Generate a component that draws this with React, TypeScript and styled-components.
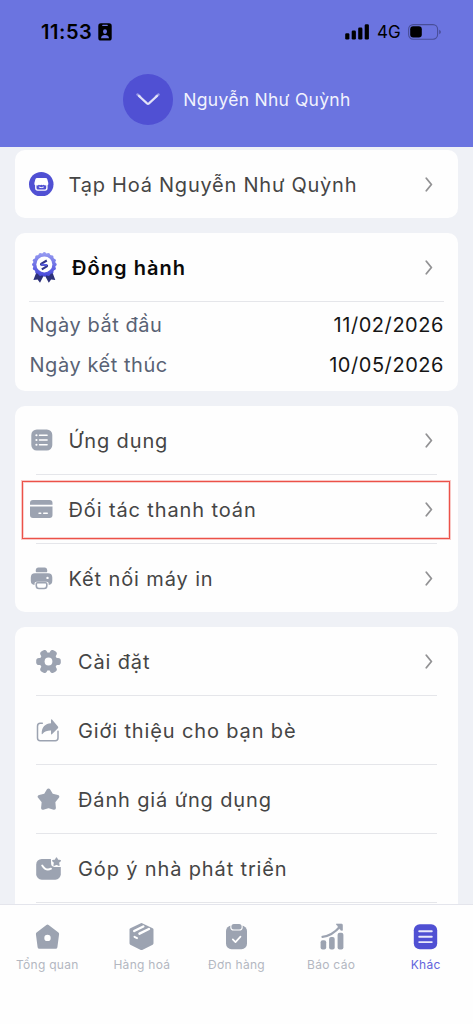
import React from "react";
import styled, { createGlobalStyle, css } from "styled-components";

const GRAY = "#9ca3b1";
const INDIGO = "#5050d3";

const GlobalStyle = createGlobalStyle`
  *, *::before, *::after { box-sizing: border-box; }
  body {
    margin: 0;
    background: #eff1f6;
    font-family: Inter, "Noto Sans", sans-serif;
    color: #454545;
  }
  svg { display: block; flex: none; }
`;

const Screen = styled.div`
  display: flex;
  flex-direction: column;
  height: 1024px;
  overflow: hidden;
  background: #eff1f6;
`;

const Header = styled.header`
  flex: none;
  height: 147px;
  background: #6b74e0;
`;

const StatusBar = styled.div`
  display: flex;
  align-items: center;
  justify-content: space-between;
  height: 63px;
  padding: 0 32px 0 41px;
  color: #000;
`;

const StatusGroup = styled.div<{ $gap: number }>`
  display: flex;
  align-items: center;
  gap: ${(p) => p.$gap}px;
`;

const Clock = styled.span`
  font-size: 20px;
  font-weight: 600;
  letter-spacing: 0.55px;
  line-height: 24px;
`;

const Network = styled.span`
  font-size: 17px;
  font-weight: 400;
  letter-spacing: 0.2px;
  line-height: 22px;
`;

const Profile = styled.div`
  display: flex;
  align-items: center;
  gap: 10px;
  height: 73px;
  padding-left: 122.7px;
`;

const Avatar = styled.div`
  display: grid;
  place-items: center;
  width: 50.6px;
  height: 50.6px;
  border-radius: 50%;
  background: ${INDIGO};
`;

const ProfileName = styled.span`
  font-size: 17.5px;
  letter-spacing: 0.28px;
  color: #f1f2fd;
`;

const Content = styled.main`
  flex: 1;
  min-height: 0;
  overflow: hidden;
  display: flex;
  flex-direction: column;
  gap: 15px;
  padding: 3px 15px 0;
`;

const Card = styled.section`
  flex: none;
  background: #fefefe;
  border-radius: 10px;

  &:last-child {
    padding-bottom: 20px;
  }
`;

const Row = styled.div<{ $inset?: number }>`
  position: relative;
  display: flex;
  align-items: center;
  height: 68px;
  padding: 0 25px 0 ${(p) => p.$inset ?? 14}px;
`;

const IconSlot = styled.div<{ $width: number }>`
  flex: none;
  width: ${(p) => p.$width}px;
`;

const Label = styled.span<{ $strong?: boolean; $tracking?: number }>`
  flex: 1;
  padding-top: 1px;
  font-size: 20px;
  line-height: 26px;
  letter-spacing: ${(p) => p.$tracking ?? 0.88}px;
  white-space: nowrap;
  ${(p) =>
    p.$strong &&
    css`
      font-weight: 600;
      color: #0a0a0a;
    `}
`;

const Divider = styled.div<{ $wide?: boolean }>`
  height: 1px;
  margin: 0 ${(p) => (p.$wide ? "14.5px 0 14px" : "21.5px 0 21px")};
  background: #e5e6ea;
`;

const Dates = styled.dl`
  margin: 0;
  padding: 3px 14px 6px 14.5px;
`;

const DateLine = styled.div`
  display: flex;
  align-items: center;
  justify-content: space-between;
  height: 40px;
  font-size: 20px;
`;

const DateName = styled.dt`
  color: #596274;
  letter-spacing: 0.55px;
`;

const DateValue = styled.dd`
  margin: 0;
  color: #161616;
  letter-spacing: 0.55px;
`;

const Highlight = styled.div`
  position: absolute;
  top: 6px;
  left: 7px;
  right: 8px;
  height: 58px;
  border: 1px solid #ec5148;
  box-shadow: 0 0 0 1px rgba(236, 81, 72, 0.3), inset 0 0 0 1px rgba(236, 81, 72, 0.25);
  pointer-events: none;
`;

const TabBar = styled.nav`
  flex: none;
  display: grid;
  grid-template-columns: repeat(5, 1fr);
  height: 120px;
  padding-top: 18px;
  background: #fefefe;
  border-top: 1px solid #e4e5ec;
`;

const Tab = styled.div<{ $active?: boolean }>`
  display: flex;
  flex-direction: column;
  align-items: center;
  gap: 7px;
  font-size: 12px;
  line-height: 16px;
  letter-spacing: 0.3px;
  color: ${(p) => (p.$active ? "#6263dc" : "#b3b7c1")};
`;

const Chevron = () => (
  <svg width="8" height="15" viewBox="0 0 8 15">
    <path d="M1.3 1.2 6.4 7.5 1.3 13.8" fill="none" stroke="#929294" strokeWidth="1.8" strokeLinecap="round" strokeLinejoin="round" />
  </svg>
);

const ContactCardIcon = () => (
  <svg width="14" height="18" viewBox="0 0 14 18">
    <rect x="0.3" y="0.3" width="13.4" height="17.2" rx="2.6" fill="#000" />
    <rect x="4.2" y="1.7" width="5.6" height="1.3" rx="0.6" fill="#6b74e0" />
    <ellipse cx="7" cy="8.6" rx="2" ry="2.4" fill="#6b74e0" />
    <path d="M3 15.2c.2-2.3 1.6-3.3 4-3.3s3.8 1 4 3.3z" fill="#6b74e0" />
  </svg>
);

const SignalIcon = () => (
  <svg width="25" height="16" viewBox="0 0 25 16">
    <rect x="0.2" y="9.3" width="4.2" height="6.2" rx="1.3" />
    <rect x="6.7" y="6.5" width="4.2" height="9" rx="1.3" />
    <rect x="13.2" y="3.5" width="4.2" height="12" rx="1.3" />
    <rect x="19.7" y="0.2" width="4.2" height="15.3" rx="1.3" />
  </svg>
);

const BatteryIcon = () => (
  <svg width="33" height="16" viewBox="0 0 33 16">
    <rect x="0.6" y="0.6" width="29" height="14.6" rx="4.6" fill="none" stroke="#484e98" strokeWidth="1.1" />
    <rect x="2.2" y="2.2" width="11.6" height="11.4" rx="3" />
    <path d="M31.2 5.7q1.7.7 1.7 2.3t-1.7 2.3z" fill="#484e98" />
  </svg>
);

const AvatarChevron = () => (
  <svg width="24" height="14" viewBox="0 0 24 14">
    <path d="M1.5 1.5 4 3.5" stroke="#9a9be8" strokeWidth="2.4" strokeLinecap="round" />
    <path d="M22.5 1.5 20 3.5" stroke="#9a9be8" strokeWidth="2.4" strokeLinecap="round" />
    <path d="M3 3 11 10.4q1 .8 2 0L21 3" fill="none" stroke="#e2e2f8" strokeWidth="2.2" strokeLinecap="round" />
  </svg>
);

const StoreIcon = () => (
  <svg width="24.5" height="24.5" viewBox="0 0 24.5 24.5">
    <circle cx="12.25" cy="12.25" r="12.25" fill={INDIGO} />
    <path d="M8.2 6h8.3q1.5 0 1.9 1.4l.9 3.5q.3 1.6-.7 2.3v2.9q0 2.600-2.500 2.600H8.600q-2.500 0-2.500-2.600v-2.900q-1-.7-.7-2.300l.9-3.500q.4-1.400 1.900-1.400z" fill="#fff" />
    <path d="M7.500 13.300q1.300.4 2.400-.5 1.200.9 2.400 0 1.200.9 2.400 0 1.100.9 2.500.5v2.700q0 1.500-1.500 1.500H9q-1.500 0-1.500-1.500z" fill={INDIGO} />
    <path d="M10.200 15.200q2 1 4.200 0" fill="none" stroke="#fff" strokeWidth="1" strokeLinecap="round" />
  </svg>
);

const BadgeIcon = () => (
  <svg width="25" height="31" viewBox="0 0 25 31">
    <defs>
      <linearGradient id="badge" x1="0" y1="0" x2="0" y2="25" gradientUnits="userSpaceOnUse">
        <stop offset="0" stopColor="#9a9ff2" />
        <stop offset="1" stopColor="#4445da" />
      </linearGradient>
    </defs>
    <path d="M4.500 20 1.400 28l4.200-.6 2.400 3.300 4.300-8.200 4.500 8.200 2.300-3.300 4.200.6L20.300 20z" fill="#2d3179" />
    <g fill="url(#badge)">
      <circle cx="12.35" cy="12.4" r="11.3" />
      {Array.from({ length: 16 }, (_, i) => {
        const a = (i * Math.PI) / 8;
        return <circle key={i} cx={12.35 + 10.6 * Math.cos(a)} cy={12.4 + 10.6 * Math.sin(a)} r="1.7" />;
      })}
    </g>
    <circle cx="12.35" cy="12.4" r="8" fill="#fff" />
    <path d="M14.800 8.500 9.500 11.600q-1 .8 0 1.200l5 .5q1 .3.300 1l-5 3" fill="none" stroke="#30348b" strokeWidth="2.1" strokeLinejoin="round" />
    <path d="M9.300 12.500 15 13.200" stroke="#5b60e6" strokeWidth="1.8" />
  </svg>
);

const AppsIcon = () => (
  <svg width="23" height="22" viewBox="0 0 23 22">
    <rect x="1.3" y="0.5" width="21" height="21" rx="5.5" fill={GRAY} />
    <g stroke="#fff" strokeWidth="1.5" strokeLinecap="round">
      <path d="M9.500 6.200h7.600M9.500 11h7.600M9.500 15.800h7.600" />
      <path d="M6.400 6.200h.1M6.400 11h.1M6.400 15.800h.1" strokeWidth="2.1" />
    </g>
  </svg>
);

const CardIcon = () => (
  <svg width="23" height="18" viewBox="0 0 23 18">
    <path d="M3 0h16.500q3 0 3 3v1.800H0V3q0-3 3-3zM0 6.500h22.500V15q0 3-3 3H3q-3 0-3-3z" fill={GRAY} />
    <path d="M9 13.200h1.800M13.700 13.200h3.600" stroke="#fff" strokeWidth="1.4" strokeLinecap="round" />
  </svg>
);

const PrinterIcon = () => (
  <svg width="23" height="23" viewBox="-0.5 0 23 23">
    <path d="M5.300 4.500V3.300Q5.300.4 8 .4h6q2.700 0 2.700 2.900v1.200q0 .7-.7.7H6q-.7 0-.7-.7z" fill={GRAY} />
    <path d="M4.500 6.200h13q4.300 0 4.300 4.300v3.300q0 3.800-3.600 4.200v-1.200q0-2-2-2H6q-2 0-2 2V18Q.3 17.600.3 13.800v-3.300q0-4.300 4.200-4.300z" fill={GRAY} />
    <path d="M7 15.700h8q1.300 0 1.300 1.300v1.800q0 2.700-2.700 2.700H8.500q-2.700 0-2.700-2.700V17q0-1.300 1.200-1.300z" fill="#fff" stroke={GRAY} strokeWidth="1.6" />
    <circle cx="17" cy="10.9" r="1.2" fill="#fff" />
  </svg>
);

const GearIcon = () => (
  <svg width="25" height="23" viewBox="0 0 25 23">
    <g fill={GRAY}>
      <circle cx="12.5" cy="11.5" r="8.9" />
      {[0, 60, 120, 180, 240, 300].map((a) => (
        <rect key={a} x="17.5" y="7.9" width="7.3" height="7.2" rx="2.8" transform={`rotate(${a} 12.5 11.5)`} />
      ))}
    </g>
    <circle cx="12.5" cy="11.5" r="3.9" fill="#fff" />
  </svg>
);

const ShareIcon = () => (
  <svg width="23" height="23" viewBox="0 0 23 23">
    <path d="M6.300 4.300H4.200Q1.500 4.300 1.500 7.300V19q0 2.700 2.700 2.700h15.100q2.700 0 2.700-2.700v-6.800" fill="none" stroke={GRAY} strokeWidth="1.5" strokeLinecap="round" />
    <path d="M15 .8v3.400C9.300 4.500 5.600 8 5.700 14.800q0 .8.700.2c2.400-2.700 5-3.500 8.600-3.400v3.300q.2.800.9.300l6-6q.8-.9 0-1.700L16 .5q-.8-.5-1 .3z" fill={GRAY} />
  </svg>
);

const StarIcon = () => (
  <svg width="25" height="23" viewBox="0 0 25 23">
    <path d="M12.500 2.300 15.500 7.300l6 1.400-4 4.900.6 6.300-5.600-1.600-5.600 1.600.6-6.300-4-4.900 6-1.400z" fill={GRAY} stroke={GRAY} strokeWidth="3.6" strokeLinejoin="round" />
  </svg>
);

const FeedbackIcon = () => (
  <svg width="25" height="23" viewBox="0 0 25 23">
    <rect x="0.2" y="2" width="24.6" height="20.7" rx="5.5" fill={GRAY} />
    <path d="M14.800 0H25v10h-6.500q-3.300-.2-3.400-3.400z" fill="#fefefe" />
    <path d="M20.500 1l1.200 2.300 2.600.4-1.900 1.900.5 2.600-2.400-1.200-2.400 1.200.5-2.600-1.800-1.900 2.500-.4z" fill={GRAY} stroke={GRAY} strokeWidth="1.4" strokeLinejoin="round" />
    <path d="M6.200 8.500c2.300 3.600 5.400 5.100 8.800 3.200" fill="none" stroke="#fff" strokeWidth="1.9" strokeLinecap="round" />
  </svg>
);

const HomeIcon = () => (
  <svg width="27" height="27" viewBox="0 0 27 27">
    <path d="M13.500 3.300 23.300 11 21.600 24H5.400L3.700 11z" fill={GRAY} stroke={GRAY} strokeWidth="3.6" strokeLinejoin="round" />
    <circle cx="13.5" cy="14.9" r="3.2" fill="#fff" />
  </svg>
);

const BoxIcon = () => (
  <svg width="27" height="27" viewBox="0 0 27 27">
    <path d="M13.500 1.600 24 6.500v13.800l-10.500 5.300L3 20.300V6.500z" fill={GRAY} stroke={GRAY} strokeWidth="3" strokeLinejoin="round" />
    <path d="M6.200 8 15.300 3.500M11.500 10.700 20.900 6" stroke="#fff" strokeWidth="2.5" strokeLinecap="round" />
    <path d="M6.500 13.800 9 15.100" stroke="#fff" strokeWidth="2" strokeLinecap="round" />
  </svg>
);

const OrderIcon = () => (
  <svg width="27" height="27" viewBox="0 0 27 27">
    <rect x="3" y="2.6" width="21" height="23.6" rx="5.5" fill={GRAY} />
    <rect x="7.3" y="0" width="12.4" height="7.6" rx="3.4" fill="#fefefe" />
    <rect x="8.4" y="1" width="10.2" height="5.5" rx="2.5" fill={GRAY} />
    <path d="M9.800 16.300l2.700 2.800 5-5.400" fill="none" stroke="#fff" strokeWidth="1.7" strokeLinecap="round" strokeLinejoin="round" />
  </svg>
);

const ReportIcon = () => (
  <svg width="27" height="27" viewBox="0 0 27 27">
    <g fill={GRAY}>
      <rect x="2.6" y="17.2" width="5.6" height="9.2" rx="2" />
      <rect x="11.1" y="14" width="5.6" height="12.4" rx="2" />
      <rect x="19.6" y="9.7" width="5.8" height="16.7" rx="2" />
      <path d="M18.200 1h5.200q1.100 0 1.100 1.100v5.200h-1.700z" stroke={GRAY} strokeWidth=".6" />
    </g>
    <path d="M4.500 13.800C11 13 17 9.500 22.300 3.200" fill="none" stroke={GRAY} strokeWidth="2.2" strokeLinecap="round" />
  </svg>
);

const MoreIcon = () => (
  <svg width="27" height="27" viewBox="0 0 27 27">
    <rect x="1.8" y="1.2" width="23.4" height="25" rx="6" fill={INDIGO} />
    <path d="M7.200 8.300h12.600M7.200 13.700h12.600M7.200 19.100h12.600" stroke="#e9e9fb" strokeWidth="1.9" strokeLinecap="round" />
  </svg>
);

const tools = [
  { label: "Ứng dụng", icon: <AppsIcon /> },
  { label: "Đối tác thanh toán", icon: <CardIcon />, highlighted: true },
  { label: "Kết nối máy in", icon: <PrinterIcon /> },
];

const settings = [
  { label: "Cài đặt", icon: <GearIcon />, link: true },
  { label: "Giới thiệu cho bạn bè", icon: <ShareIcon /> },
  { label: "Đánh giá ứng dụng", icon: <StarIcon /> },
  { label: "Góp ý nhà phát triển", icon: <FeedbackIcon /> },
];

const tabs = [
  { label: "Tổng quan", icon: <HomeIcon /> },
  { label: "Hàng hoá", icon: <BoxIcon /> },
  { label: "Đơn hàng", icon: <OrderIcon /> },
  { label: "Báo cáo", icon: <ReportIcon /> },
  { label: "Khác", icon: <MoreIcon />, active: true },
];

export default function App() {
  return (
    <Screen>
      <GlobalStyle />
      <Header>
        <StatusBar>
          <StatusGroup $gap={6}>
            <Clock>11:53</Clock>
            <ContactCardIcon />
          </StatusGroup>
          <StatusGroup $gap={7}>
            <SignalIcon />
            <Network>4G</Network>
            <BatteryIcon />
          </StatusGroup>
        </StatusBar>
        <Profile>
          <Avatar>
            <AvatarChevron />
          </Avatar>
          <ProfileName>Nguyễn Như Quỳnh</ProfileName>
        </Profile>
      </Header>

      <Content>
        <Card>
          <Row>
            <IconSlot $width={39.5}>
              <StoreIcon />
            </IconSlot>
            <Label $tracking={0.76}>Tạp Hoá Nguyễn Như Quỳnh</Label>
            <Chevron />
          </Row>
        </Card>

        <Card>
          <Row $inset={17}>
            <IconSlot $width={40}>
              <BadgeIcon />
            </IconSlot>
            <Label $strong $tracking={1.05}>Đồng hành</Label>
            <Chevron />
          </Row>
          <Divider $wide />
          <Dates>
            <DateLine>
              <DateName>Ngày bắt đầu</DateName>
              <DateValue>11/02/2026</DateValue>
            </DateLine>
            <DateLine>
              <DateName>Ngày kết thúc</DateName>
              <DateValue>10/05/2026</DateValue>
            </DateLine>
          </Dates>
        </Card>

        <Card>
          {tools.map((item, i) => (
            <React.Fragment key={item.label}>
              {i > 0 && <Divider />}
              <Row $inset={14.5}>
                <IconSlot $width={39}>{item.icon}</IconSlot>
                <Label>{item.label}</Label>
                <Chevron />
                {item.highlighted && <Highlight />}
              </Row>
            </React.Fragment>
          ))}
        </Card>

        <Card>
          {settings.map((item) => (
            <React.Fragment key={item.label}>
              <Row $inset={21}>
                <IconSlot $width={42}>{item.icon}</IconSlot>
                <Label $tracking={0.86}>{item.label}</Label>
                {item.link && <Chevron />}
              </Row>
              <Divider />
            </React.Fragment>
          ))}
        </Card>
      </Content>

      <TabBar>
        {tabs.map((tab) => (
          <Tab key={tab.label} $active={tab.active}>
            {tab.icon}
            <span>{tab.label}</span>
          </Tab>
        ))}
      </TabBar>
    </Screen>
  );
}
